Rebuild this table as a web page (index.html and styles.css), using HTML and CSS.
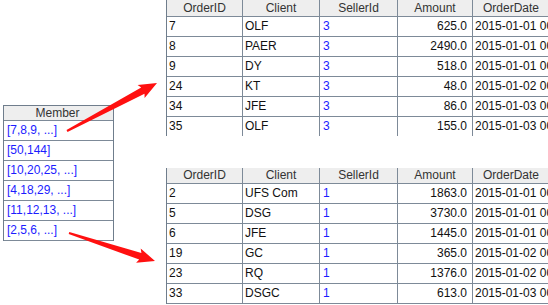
FILE: index.html
```html
<!DOCTYPE html>
<html>
<head>
<meta charset="utf-8">
<link rel="stylesheet" href="styles.css">
</head>
<body>
<div class="page">
  <div class="left">
    <div class="grid member">
      <div class="row head"><div class="cell c-mem">Member</div></div>
      <div class="row"><div class="cell c-mem blue">[7,8,9, ...]</div></div>
      <div class="row"><div class="cell c-mem blue">[50,144]</div></div>
      <div class="row"><div class="cell c-mem blue">[10,20,25, ...]</div></div>
      <div class="row"><div class="cell c-mem blue">[4,18,29, ...]</div></div>
      <div class="row"><div class="cell c-mem blue">[11,12,13, ...]</div></div>
      <div class="row"><div class="cell c-mem blue">[2,5,6, ...]</div></div>
    </div>
  </div>
  <div class="right">
    <div class="grid orders top">
      <div class="row head">
        <div class="cell c1">OrderID</div><div class="cell c2">Client</div><div class="cell c3">SellerId</div><div class="cell c4">Amount</div><div class="cell c5">OrderDate</div>
      </div>
      <div class="row"><div class="cell c1">7</div><div class="cell c2">OLF</div><div class="cell c3 blue">3</div><div class="cell c4 num">625.0</div><div class="cell c5">2015-01-01 00:00:00</div></div>
      <div class="row"><div class="cell c1">8</div><div class="cell c2">PAER</div><div class="cell c3 blue">3</div><div class="cell c4 num">2490.0</div><div class="cell c5">2015-01-01 00:00:00</div></div>
      <div class="row"><div class="cell c1">9</div><div class="cell c2">DY</div><div class="cell c3 blue">3</div><div class="cell c4 num">518.0</div><div class="cell c5">2015-01-01 00:00:00</div></div>
      <div class="row"><div class="cell c1">24</div><div class="cell c2">KT</div><div class="cell c3 blue">3</div><div class="cell c4 num">48.0</div><div class="cell c5">2015-01-02 00:00:00</div></div>
      <div class="row"><div class="cell c1">34</div><div class="cell c2">JFE</div><div class="cell c3 blue">3</div><div class="cell c4 num">86.0</div><div class="cell c5">2015-01-03 00:00:00</div></div>
      <div class="row last"><div class="cell c1">35</div><div class="cell c2">OLF</div><div class="cell c3 blue">3</div><div class="cell c4 num">155.0</div><div class="cell c5">2015-01-03 00:00:00</div></div>
    </div>
    <div class="grid orders bottom">
      <div class="row head">
        <div class="cell c1">OrderID</div><div class="cell c2">Client</div><div class="cell c3">SellerId</div><div class="cell c4">Amount</div><div class="cell c5">OrderDate</div>
      </div>
      <div class="row"><div class="cell c1">2</div><div class="cell c2">UFS Com</div><div class="cell c3 blue">1</div><div class="cell c4 num">1863.0</div><div class="cell c5">2015-01-01 00:00:00</div></div>
      <div class="row"><div class="cell c1">5</div><div class="cell c2">DSG</div><div class="cell c3 blue">1</div><div class="cell c4 num">3730.0</div><div class="cell c5">2015-01-01 00:00:00</div></div>
      <div class="row"><div class="cell c1">6</div><div class="cell c2">JFE</div><div class="cell c3 blue">1</div><div class="cell c4 num">1445.0</div><div class="cell c5">2015-01-01 00:00:00</div></div>
      <div class="row"><div class="cell c1">19</div><div class="cell c2">GC</div><div class="cell c3 blue">1</div><div class="cell c4 num">365.0</div><div class="cell c5">2015-01-02 00:00:00</div></div>
      <div class="row"><div class="cell c1">23</div><div class="cell c2">RQ</div><div class="cell c3 blue">1</div><div class="cell c4 num">1376.0</div><div class="cell c5">2015-01-02 00:00:00</div></div>
      <div class="row"><div class="cell c1">33</div><div class="cell c2">DSGC</div><div class="cell c3 blue">1</div><div class="cell c4 num">613.0</div><div class="cell c5">2015-01-03 00:00:00</div></div>
    </div>
  </div>
  <svg class="arrows" width="548" height="305" viewBox="0 0 548 305">
    <polygon points="66.5,130.1 141.2,87.5 137.6,84.9 157,83 144.6,98.1 144.5,93.7 67.5,131.9"/>
    <polygon points="69.3,232.05 141.4,253.0 140.7,248.5 155,261 136.1,262.7 139.2,259.6 68.7,233.95"/>
  </svg>
</div>
</body>
</html>
```

FILE: styles.css
```css
html, body {
  margin: 0;
  padding: 0;
  background: #ffffff;
}

body {
  width: 548px;
  height: 305px;
  overflow: hidden;
  font-family: "Liberation Sans", Arial, sans-serif;
  font-size: 12px;
  color: #111111;
}

.page {
  position: relative;
  display: flex;
  width: 548px;
  height: 305px;
}

.left {
  width: 166px;
  box-sizing: border-box;
  padding: 105px 0 0 3px;
  flex: none;
}

.right {
  flex: 1;
  display: flex;
  flex-direction: column;
  gap: 32px;
  overflow: hidden;
}

.grid {
  border-left: 1px solid #6f7d8c;
}

.row {
  display: flex;
  height: 20px;
  box-sizing: border-box;
  border-bottom: 1px solid #7d8a98;
}

.row.last {
  border-bottom: none;
  height: 19px;
}

.cell {
  box-sizing: border-box;
  flex: none;
  height: 19px;
  line-height: 19px;
  padding-left: 2px;
  border-right: 1px solid #7d8a98;
  white-space: nowrap;
  overflow: hidden;
}

.head {
  background: #eeeeee;
  height: 16px;
}

.head .cell {
  height: 15px;
  line-height: 15px;
  text-align: center;
  padding-left: 0;
  color: #333333;
}

.top .head {
  height: 17px;
}

.top .head .cell {
  height: 16px;
  line-height: 16px;
}

.member {
  width: 109px;
  border: 1px solid #6f7d8c;
  border-bottom: none;
}

.member .head {
  height: 15px;
}

.member .head .cell {
  height: 14px;
  line-height: 14px;
}

.c-mem {
  width: 107px;
  border-right: none;
  padding-left: 3px;
}

.c1 { width: 76px; }
.c2 { width: 77px; }
.c3 { width: 78px; padding-left: 3px; }
.c4 { width: 75px; }
.c5 { width: 76px; border-right: none; }

.head .c5 {
  overflow: visible;
}

.num {
  text-align: right;
  padding-right: 5px;
}

.blue {
  color: #1c1cff;
}

.arrows {
  position: absolute;
  left: 0;
  top: 0;
  pointer-events: none;
}

.arrows polygon {
  fill: #ff1010;
}
```
